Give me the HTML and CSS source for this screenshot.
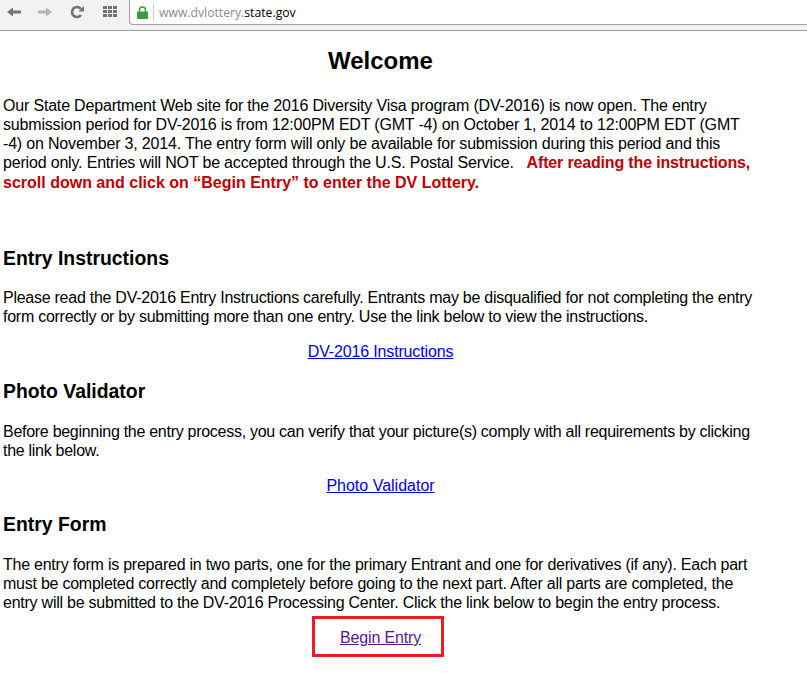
FILE: index.html
```html
<!DOCTYPE html>
<html lang="en">
<head>
<meta charset="utf-8">
<title>DV Lottery</title>
<link rel="stylesheet" href="styles.css">
</head>
<body>
<header class="toolbar">
  <nav class="nav">
    <svg class="icon" viewBox="0 0 16 16" width="16" height="16"><path d="M15 6.500H7V3.500L1 8l6 4.500V9.500h8z" fill="#6f7377"/></svg>
    <svg class="icon forward" viewBox="0 0 16 16" width="16" height="16"><path d="M1 6.500h8V3.500L15 8l-6 4.500V9.500H1z" fill="#b4b6b8"/></svg>
    <svg class="icon reload" viewBox="0 0 14 14" width="14" height="14"><path d="M11 10a5 5 0 1 1 0-6" fill="none" stroke="#6f7377" stroke-width="2.600"/><path d="M8.500 6.500H14V1z" fill="#6f7377"/></svg>
    <svg class="icon apps" viewBox="0 0 14 11" width="14" height="11"><path d="M0 0h4v3H0zM5 0h4v3H5zM10 0h4v3h-4zM0 4h4v3H0zM5 4h4v3H5zM10 4h4v3h-4zM0 8h4v3H0zM5 8h4v3H5zM10 8h4v3h-4z" fill="#6f7377"/></svg>
  </nav>
  <div class="omnibox">
    <svg class="lock" viewBox="0 0 11 13" width="11" height="13"><path d="M2.500 6V4a3 3 0 0 1 6 0v2" fill="none" stroke="#3d9c3d" stroke-width="1.500"/><rect x="0" y="5.500" width="11" height="7.500" rx="1" fill="#3d9c3d"/></svg>
    <span class="sep"></span>
    <span class="url"><span class="url-dim">www.dvlottery.</span>state.gov</span>
  </div>
</header>
<main class="page">
  <h1 class="title">Welcome</h1>
  <p class="intro">Our State Department Web site for the 2016 Diversity Visa program (DV-2016) is now open. The entry submission period for DV-2016 is from 12:00PM EDT (GMT -4) on October 1, 2014 to 12:00PM EDT (GMT -4) on November 3, 2014. The entry form will only be available for submission during this period and this period only. Entries will NOT be accepted through the U.S. Postal Service. &nbsp; <strong class="alert">After reading the instructions,</strong> <strong class="alert alert-tail">scroll down and click on “Begin Entry” to enter the DV Lottery.</strong></p>

  <h2 class="heading first">Entry Instructions</h2>
  <p class="body tight">Please read the DV-2016 Entry Instructions carefully. Entrants may be disqualified for not completing the entry form correctly or by submitting more than one entry. Use the link below to view the instructions.</p>
  <p class="link-row"><a class="link" href="#a">DV-2016 Instructions</a></p>

  <h2 class="heading">Photo Validator</h2>
  <p class="body tighter">Before beginning the entry process, you can verify that your picture(s) comply with all requirements by clicking the link below.</p>
  <p class="link-row"><a class="link wide" href="#b">Photo Validator</a></p>

  <h2 class="heading form">Entry Form</h2>
  <p class="body">The entry form is prepared in two parts, one for the primary Entrant and one for derivatives (if any). Each part must be completed correctly and completely before going to the next part. After all parts are completed, the entry will be submitted to the DV-2016 Processing Center. Click the link below to begin the entry process.</p>
  <p class="link-row begin-row"><a class="link visited" href="#c">Begin Entry</a><span class="highlight"></span></p>
</main>
</body>
</html>
```

FILE: styles.css
```css
* { box-sizing: border-box; }
html, body { margin: 0; padding: 0; background: #fff; }
body { font-family: "Liberation Sans", Arial, sans-serif; font-size: 16px; line-height: 19px; color: #000; overflow: hidden; height: 673px; }

.toolbar { display: flex; height: 31px; background: #f2f2f2; border-bottom: 1px solid #a0a0a0; }
.nav { display: flex; align-items: center; width: 129px; height: 23px; flex: none; padding-left: 6px; }
.icon { flex: none; }
.forward { margin-left: 15px; }
.reload { margin-left: 17px; }
.apps { margin-left: 19px; }
.omnibox { flex: 1; height: 25px; display: flex; align-items: center; background: #fff; border-left: 1px solid #a0a0a0; border-bottom: 1px solid #a0a0a0; border-bottom-left-radius: 4px; padding-left: 7px; }
.lock { flex: none; }
.sep { width: 1px; height: 18px; background: #d0d0d0; margin: 0 5px 0 5px; }
.url { font-family: "Open Sans", sans-serif; font-size: 12.200px; color: #000; }
.url-dim { color: #8a8a96; }

.page { width: 758px; padding-left: 3px; }
.title { margin: 16px 0 0; font-size: 24px; line-height: 28px; font-weight: bold; text-align: center; }
.intro { margin: 21px 0 0; letter-spacing: -0.18px; }
.alert { color: #c00000; line-height: 20px; letter-spacing: -0.16px; }
.alert-tail { letter-spacing: 0; }
.heading { margin: 19px 0 0; font-size: 19.400px; line-height: 23px; font-weight: bold; }
.heading.first { margin: 54px 0 -1px; }
.heading.form { margin-top: 18px; }
.body { margin: 19px 0 0; letter-spacing: -0.24px; }
.body.tight { letter-spacing: -0.26px; }
.body.tighter { letter-spacing: -0.28px; }
.link-row { margin: 16px 0 0; text-align: center; letter-spacing: -0.15px; }
.link { color: #0000ee; text-decoration: underline; }
.link.wide { letter-spacing: 0; }
.visited { color: #551a8b; }
.begin-row { position: relative; }
.highlight { position: absolute; left: 309px; top: -12px; width: 132px; height: 41px; border: 3px solid #ed1c24; }
```
